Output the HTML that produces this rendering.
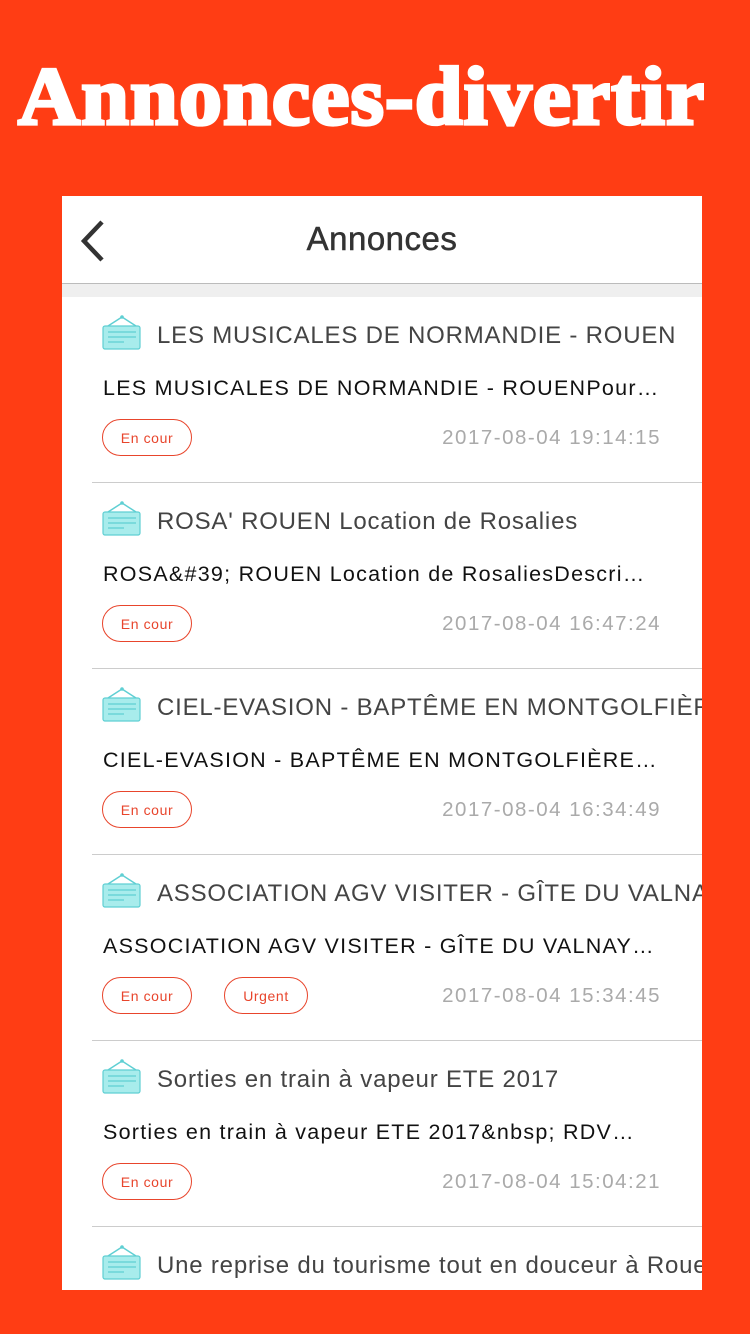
<!DOCTYPE html>
<html><head><meta charset="utf-8"><style>
html,body{margin:0;width:750px;height:1334px;overflow:hidden}
body{background:#FF3D14;position:relative;font-family:"Liberation Sans",sans-serif}
.big{position:absolute;left:18px;top:52px;font-family:"Liberation Serif",serif;font-weight:bold;font-size:74px;color:#fff;-webkit-text-stroke:3px #fff;letter-spacing:1px;white-space:nowrap;line-height:90px;transform:scale(1.16,1.12);transform-origin:0 50%}
.card{position:absolute;left:62px;top:196px;width:640px;height:1094px;background:#fff;overflow:hidden}
.hdr{height:87px;border-bottom:1px solid #bbb;position:relative}
.hdr .t{position:absolute;left:0;right:0;top:24px;text-align:center;font-size:33px;color:#333;letter-spacing:0.5px;-webkit-text-stroke:0.5px #333}
.band{height:13px;background:#efefef}
.item{position:relative;height:185px;margin-left:30px;border-bottom:1px solid #ccc}
.ic{position:absolute;left:10px;top:18px}
.ti{position:absolute;left:65px;top:25px;font-size:24px;color:#444;white-space:nowrap;letter-spacing:0.8px}
.de{position:absolute;left:11px;top:79px;font-size:21.5px;color:#111;white-space:nowrap;letter-spacing:1.25px}
.tag{position:absolute;top:122px;height:37px;width:90px;border:1px solid #e8452c;border-radius:19px;color:#e8452c;font-size:14px;text-align:center;line-height:36px;box-sizing:border-box;letter-spacing:0.6px}
.dt{position:absolute;right:41px;top:129px;font-size:20.5px;color:#aaa;letter-spacing:1.5px}
</style></head><body>
<div class="big">Annonces-divertir</div>
<div class="card">
<div class="hdr"><svg style="position:absolute;left:16px;top:24px" width="28" height="42" viewBox="0 0 28 42"><path d="M24 2 L6 21 L24 40" stroke="#333" stroke-width="4.5" fill="none"/></svg><div class="t">Annonces</div></div>
<div class="band"></div>
<div id="list"></div>
</div>
<script>
var d=[["LES MUSICALES DE NORMANDIE - ROUEN","LES MUSICALES DE NORMANDIE - ROUENPour…","2017-08-04 19:14:15",0],
["ROSA' ROUEN Location de Rosalies","ROSA&amp;#39; ROUEN Location de RosaliesDescri…","2017-08-04 16:47:24",0],
["CIEL-EVASION - BAPTÊME EN MONTGOLFIÈRE","CIEL-EVASION - BAPTÊME EN MONTGOLFIÈRE…","2017-08-04 16:34:49",0],
["ASSOCIATION AGV VISITER - GÎTE DU VALNAY","ASSOCIATION AGV VISITER - GÎTE DU VALNAY…","2017-08-04 15:34:45",1],
["Sorties en train à vapeur ETE 2017","Sorties en train à vapeur ETE 2017&amp;nbsp; RDV…","2017-08-04 15:04:21",0],
["Une reprise du tourisme tout en douceur à Rouen","","",0]];
var ic='<svg class="ic" width="40" height="36" viewBox="0 0 40 36"><path d="M20 2 L6 11 M20 2 L34 11" stroke="#5fcfd3" stroke-width="1.5" fill="none"/><circle cx="20" cy="2" r="1.8" fill="#5fcfd3"/><rect x="1" y="11" width="37" height="23" rx="2" fill="#a8ecec" stroke="#5fcfd3" stroke-width="1.2"/><path d="M6 17H34M6 22H34M6 27H22" stroke="#5fcfd3" stroke-width="1.2"/></svg>';
var h='';d.forEach(function(x){h+='<div class="item">'+ic+'<div class="ti">'+x[0]+'</div>'+(x[1]?'<div class="de">'+x[1]+'</div><div class="tag" style="left:10px">En cour</div>'+(x[3]?'<div class="tag" style="left:132px;width:84px">Urgent</div>':'')+'<div class="dt">'+x[2]+'</div>':'')+'</div>'});
document.getElementById('list').innerHTML=h;
</script>
</body></html>
